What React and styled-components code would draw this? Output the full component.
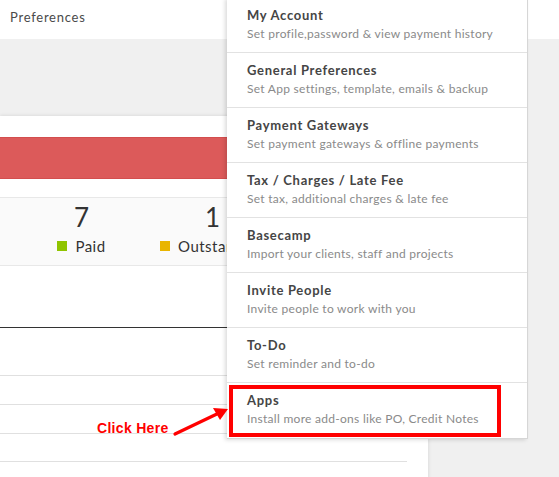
import React from 'react';
import styled, { createGlobalStyle } from 'styled-components';

const GlobalStyle = createGlobalStyle`
  html, body {
    margin: 0;
    padding: 0;
    background: #f0f0f0;
    font-family: Lato, "Open Sans", Arial, sans-serif;
  }
  * { box-sizing: border-box; }
`;

const menuItems = [
  { title: 'My Account', sub: 'Set profile,password & view payment history' },
  { title: 'General Preferences', sub: 'Set App settings, template, emails & backup' },
  { title: 'Payment Gateways', sub: 'Set payment gateways & offline payments' },
  { title: 'Tax / Charges / Late Fee', sub: 'Set tax, additional charges & late fee' },
  { title: 'Basecamp', sub: 'Import your clients, staff and projects' },
  { title: 'Invite People', sub: 'Invite people to work with you' },
  { title: 'To-Do', sub: 'Set reminder and to-do' },
  { title: 'Apps', sub: 'Install more add-ons like PO, Credit Notes', highlight: true },
];

const stats = [
  { value: '7', label: 'Paid', color: '#8fc400' },
  { value: '1', label: 'Outstanding', color: '#e9b500' },
];

function App() {
  return (
    <>
      <GlobalStyle />
      <Page>
        <TopBar>Preferences</TopBar>
        <Content>
          <Card>
            <RedBar />
            <StatsRow>
              {stats.map((s) => (
                <Stat key={s.label}>
                  <StatValue>{s.value}</StatValue>
                  <StatLabel>
                    <Dot color={s.color} />
                    {s.label}
                  </StatLabel>
                </Stat>
              ))}
            </StatsRow>
            <Table>
              <HeadRow />
              <Row h={48} />
              <Row h={29} />
              <Row h={29} />
              <Row h={28} />
            </Table>
          </Card>
        </Content>

        <Menu>
          {menuItems.map((item) => (
            <MenuItem key={item.title}>
              <MenuTitle>{item.title}</MenuTitle>
              <MenuSub>{item.sub}</MenuSub>
              {item.highlight && <Highlight />}
            </MenuItem>
          ))}
        </Menu>

        <ClickHere>Click Here</ClickHere>
        <Arrow width="60" height="34" viewBox="0 0 60 34">
          <line x1="4" y1="30" x2="48" y2="9" stroke="#f00" strokeWidth="3.2" strokeLinecap="round" />
          <polygon points="57,5 42,4 49,16" fill="#f00" />
        </Arrow>
      </Page>
    </>
  );
}

export default App;

const Page = styled.div`
  position: relative;
  width: 559px;
  height: 477px;
  overflow: hidden;
  background: #f0f0f0;
`;

const TopBar = styled.div`
  height: 39px;
  background: #fff;
  display: flex;
  align-items: center;
  padding: 0 0 6px 10px;
  font-size: 13px;
  color: #4a4a4a;
  letter-spacing: 0.75px;
`;

const Content = styled.div`
  padding-top: 77px;
  width: 429px;
`;

const Card = styled.div`
  background: #fff;
  padding: 21px 21px 0 0;
  height: 400px;
  border-right: 1px solid #e4e4e4;
  box-shadow: 0 -1px 3px rgba(0, 0, 0, 0.08);
`;

const RedBar = styled.div`
  height: 42px;
  margin-right: -21px;
  background: #dc5a5a;
  border-top: 1px solid #d34e4e;
  border-bottom: 1px solid #d34e4e;
`;

const StatsRow = styled.div`
  margin-top: 18px;
  margin-right: -21px;
  height: 69px;
  background: #fafafa;
  border-top: 1px solid #e8e8e8;
  border-bottom: 1px solid #e8e8e8;
  display: flex;
  padding-left: 16px;
`;

const Stat = styled.div`
  width: 131px;
  display: flex;
  flex-direction: column;
  align-items: center;
  padding-top: 4px;
`;

const StatValue = styled.div`
  font-size: 26px;
  font-weight: 400;
  color: #333;
  line-height: 30px;
`;

const StatLabel = styled.div`
  display: flex;
  align-items: center;
  gap: 8px;
  font-size: 15px;
  color: #333;
  margin-top: 5px;
  letter-spacing: 0.5px;
`;

const Dot = styled.span`
  width: 10px;
  height: 10px;
  background: ${(p) => p.color};
`;

const Table = styled.div`
  margin-top: 61px;
`;

const HeadRow = styled.div`
  height: 1px;
  background: #333;
`;

const Row = styled.div`
  height: ${(p) => p.h}px;
  border-bottom: 1px solid #e0e0e0;
`;

const Menu = styled.div`
  position: absolute;
  top: -2px;
  left: 227px;
  width: 301px;
  background: #fff;
  border-right: 1px solid #d6d6d6;
  border-bottom: 1px solid #d6d6d6;
  box-shadow: -2px 1px 4px rgba(0, 0, 0, 0.14);
`;

const MenuItem = styled.div`
  position: relative;
  height: 55px;
  padding: 8px 0 0 20px;
  border-bottom: 1px solid #e2e2e2;
  &:last-child {
    border-bottom: none;
  }
`;

const MenuTitle = styled.div`
  font-size: 13px;
  font-weight: 700;
  color: #454545;
  line-height: 18px;
  letter-spacing: 0.7px;
`;

const MenuSub = styled.div`
  font-size: 12px;
  color: #8a8a8a;
  line-height: 18px;
  margin-top: 1px;
  letter-spacing: 0.28px;
`;

const Highlight = styled.div`
  position: absolute;
  top: 2px;
  left: 2px;
  width: 272px;
  height: 52px;
  border: 4px solid #f00;
`;

const ClickHere = styled.div`
  position: absolute;
  left: 97px;
  top: 420px;
  font-family: "Liberation Sans", Arial, sans-serif;
  font-weight: 700;
  font-size: 14px;
  color: #f00;
  letter-spacing: 0.3px;
`;

const Arrow = styled.svg`
  position: absolute;
  left: 171px;
  top: 404px;
`;
